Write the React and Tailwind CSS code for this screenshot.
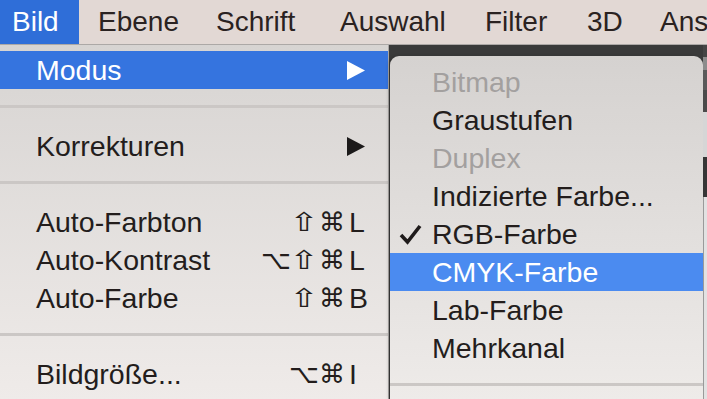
import React from 'react';

const menuBar = [
  { label: 'Bild', cls: 'w-[79px] bg-[#2f6ed8] text-white' },
  { label: 'Ebene', cls: 'ml-[7px] w-[118px]' },
  { label: 'Schrift', cls: 'w-[124px]' },
  { label: 'Auswahl', cls: 'w-[145px]' },
  { label: 'Filter', cls: 'w-[102px]' },
  { label: '3D', cls: 'w-[73px]' },
  { label: 'Ansicht', cls: 'flex-1' },
];

const mainItems = [
  { label: 'Modus', arrow: true, active: true },
  { sep: true },
  { label: 'Korrekturen', arrow: true },
  { sep: true },
  { label: 'Auto-Farbton', mods: ['⇧', '⌘'], key: 'L' },
  { label: 'Auto-Kontrast', mods: ['⌥', '⇧', '⌘'], key: 'L' },
  { label: 'Auto-Farbe', mods: ['⇧', '⌘'], key: 'B' },
  { sep: true },
  { label: 'Bildgröße...', mods: ['⌥', '⌘'], key: 'I' },
];

const subItems = [
  { label: 'Bitmap', disabled: true },
  { label: 'Graustufen' },
  { label: 'Duplex', disabled: true },
  { label: 'Indizierte Farbe...' },
  { label: 'RGB-Farbe', checked: true },
  { label: 'CMYK-Farbe', active: true },
  { label: 'Lab-Farbe' },
  { label: 'Mehrkanal' },
  { sep: true },
];

const Separator = () => (
  <div className="h-[38px] flex flex-col justify-center">
    <div className="h-[3px] mb-[3px] bg-[#cbc7c5]" />
  </div>
);

const Arrow = ({ white }) => (
  <svg width="18" height="19" viewBox="0 0 18 19" className="mr-[3px]">
    <polygon points="0,0 18,9.5 0,19" fill={white ? '#ffffff' : '#1c1a1a'} />
  </svg>
);

const Check = () => (
  <svg width="23" height="21" viewBox="0 0 23 21">
    <polyline points="2,11 8.5,18 21,2" fill="none" stroke="#1f1b1b" strokeWidth="3.6" />
  </svg>
);

const ModKey = ({ g }) => (
  <span className="w-[28px] flex justify-center text-[26px] font-['DejaVu_Sans',sans-serif]">
    <span className={g === '⇧' ? 'inline-block scale-x-[1.35]' : 'inline-block'}>{g}</span>
  </span>
);

const App = () => {
  return (
    <div className="w-[707px] h-[399px] overflow-hidden flex flex-col bg-[#3c3c3c] font-['Liberation_Sans','DejaVu_Sans',sans-serif] text-[#231d1c]">
      {/* menu bar */}
      <div className="h-[44px] flex bg-[#e2d8d4] border-b border-[#aca8a6] box-content text-[28px] leading-[44px] whitespace-nowrap overflow-hidden text-[#2a2221]">
        {menuBar.map((m) => (
          <div key={m.label} className={`pl-[12px] shrink-0 ${m.cls}`}>
            {m.label}
          </div>
        ))}
      </div>

      <div className="flex flex-1 min-h-0">
        {/* main menu */}
        <div className="w-[389px] shrink-0 border-r border-[#a8a5a3] bg-linear-to-b from-[#d7d4d2] to-[#efebe9] pt-[6px] text-[28.5px] leading-[38px]">
          {mainItems.map((it, i) =>
            it.sep ? (
              <Separator key={i} />
            ) : (
              <div
                key={i}
                className={`h-[38px] flex items-center pl-[36px] pr-[20px] ${it.active ? 'bg-[#3574df] text-white' : ''}`}
              >
                <span className="flex-1">{it.label}</span>
                {it.arrow && <Arrow white={it.active} />}
                {it.mods && (
                  <span className="flex items-center">
                    {it.mods.map((g, j) => (
                      <ModKey key={j} g={g} />
                    ))}
                    <span className="w-[19px] ml-[3px]">{it.key}</span>
                  </span>
                )}
              </div>
            )
          )}
        </div>

        {/* right side: submenu over the dark app background */}
        <div className="w-[314px] shrink-0 pt-[11px] pl-[1px] bg-[#3a3a3a]">
          <div className="h-full rounded-t-[9px] bg-linear-to-b from-[#d5d2d0] to-[#eeebe9] pt-[7px] text-[28.5px] leading-[38px] shadow-[-2px_0_3px_rgba(0,0,0,0.15)]">
            {subItems.map((it, i) =>
              it.sep ? (
                <Separator key={i} />
              ) : (
                <div
                  key={i}
                  className={`h-[38px] flex items-center ${it.active ? 'bg-[#4b8bf0] text-white' : ''} ${it.disabled ? 'text-[#a3a09f]' : ''}`}
                >
                  <span className="w-[42px] pl-[9px] flex items-center">{it.checked && <Check />}</span>
                  <span>{it.label}</span>
                </div>
              )
            )}
          </div>
        </div>

        {/* sliver of the window behind */}
        <div className="flex-1 flex flex-col">
          <div className="h-[12px] bg-[#444444]" />
          <div className="h-[13px] bg-[#8c8c8c]" />
          <div className="h-[20px] bg-[#5a5a5a]" />
          <div className="h-[22px] bg-[#4a4a4a]" />
          <div className="h-[45px] bg-[#d6d6d6]" />
          <div className="h-[40px] bg-[#363636]" />
          <div className="flex-1 bg-[#e2e2e2] border-l border-[#9a9a9a]" />
        </div>
      </div>
    </div>
  );
};

export default App;
